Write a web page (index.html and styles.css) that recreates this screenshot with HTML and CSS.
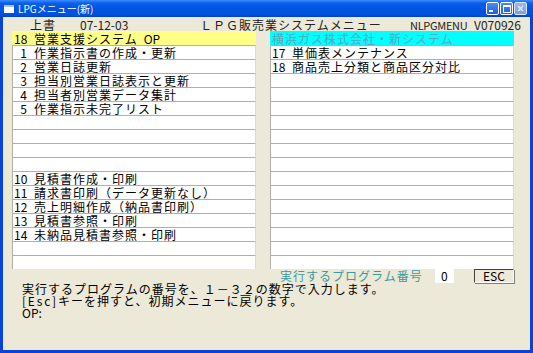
FILE: index.html
```html
<!DOCTYPE html>
<html lang="ja">
<head>
    <meta charset="UTF-8">
    <meta name="viewport" content="width=device-width, initial-scale=1.0">
    <title>LPGメニュー(新)</title>
    <link rel="stylesheet" href="styles.css">
</head>
<body>
<div class="window">
    <div class="titlebar">
        <span class="app-icon"></span>
        <span class="title-text">LPGメニュー(新)</span>
        <div class="controls">
            <span class="ctl ctl-min"></span>
            <span class="ctl ctl-max"></span>
            <span class="ctl ctl-close">
                <svg width="11" height="11" viewBox="0 0 11 11"><path d="M3 3 L8 8 M8 3 L3 8" stroke="#dfe8f6" stroke-width="1.6"/></svg>
            </span>
        </div>
    </div>

    <div class="client">
        <div class="header">
            <span>上書</span>
            <span class="lat">07-12-03</span>
            <span>ＬＰＧ販売業システムメニュー</span>
            <span class="lat narrow">NLPGMENU</span>
            <span class="lat">V070926</span>
        </div>

        <div class="lists">
            <div class="list">
                <div class="row row-yellow"><span class="no">18</span>営業支援システム<span class="lat op">OP</span></div>
                <div class="row"><span class="no">1</span>作業指示書の作成・更新</div>
                <div class="row"><span class="no">2</span>営業日誌更新</div>
                <div class="row"><span class="no">3</span>担当別営業日誌表示と更新</div>
                <div class="row"><span class="no">4</span>担当者別営業データ集計</div>
                <div class="row"><span class="no">5</span>作業指示未完了リスト</div>
                <div class="row"></div>
                <div class="row"></div>
                <div class="row"></div>
                <div class="row"></div>
                <div class="row"><span class="no">10</span>見積書作成・印刷</div>
                <div class="row"><span class="no">11</span>請求書印刷（データ更新なし）</div>
                <div class="row"><span class="no">12</span>売上明細作成（納品書印刷）</div>
                <div class="row"><span class="no">13</span>見積書参照・印刷</div>
                <div class="row"><span class="no">14</span>未納品見積書参照・印刷</div>
                <div class="row"></div>
                <div class="row"></div>
            </div>
            <div class="list">
                <div class="row row-cyan">横浜ガス株式会社・新システム</div>
                <div class="row"><span class="no">17</span>単価表メンテナンス</div>
                <div class="row"><span class="no">18</span>商品売上分類と商品区分対比</div>
                <div class="row"></div>
                <div class="row"></div>
                <div class="row"></div>
                <div class="row"></div>
                <div class="row"></div>
                <div class="row"></div>
                <div class="row"></div>
                <div class="row"></div>
                <div class="row"></div>
                <div class="row"></div>
                <div class="row"></div>
                <div class="row"></div>
                <div class="row"></div>
                <div class="row"></div>
            </div>
        </div>

        <div class="prompt">
            <span class="prompt-label">実行するプログラム番号</span>
            <span class="prompt-input lat">0</span>
            <span class="esc-btn lat">ESC</span>
        </div>

        <div class="help">
            <div>実行するプログラムの番号を、１－３２の数字で入力します。</div>
            <div><span class="esc-key">[Esc]</span>キーを押すと、初期メニューに戻ります。</div>
            <div class="lat">OP:</div>
        </div>
    </div>
</div>
</body>
</html>
```

FILE: styles.css
```css
* {
    padding: 0;
    margin: 0;
    box-sizing: border-box;
}

body {
    width: 533px;
    height: 353px;
    overflow: hidden;
    background: #ece9d8;
    font-family: "Noto Sans CJK JP", sans-serif;
    font-size: 12px;
    letter-spacing: 1px;
    color: #000;
}

/* 半角の文字 */
.lat {
    letter-spacing: 0;
}

.narrow {
    font-size: 11px;
    letter-spacing: -0.3px;
}

.esc-key {
    letter-spacing: 1.8px;
}

.window {
    width: 533px;
    height: 353px;
    display: flex;
    flex-direction: column;
    background: #0842d6;
}

.titlebar {
    height: 17px;
    display: flex;
    align-items: center;
    padding-left: 4px;
    background: linear-gradient(to bottom, #3d8bff 0%, #0d5fe9 18%, #0054e3 50%, #0052dc 85%, #0043c4 100%);
    color: #fff;
}

.app-icon {
    width: 10px;
    height: 8px;
    background: #fff;
    border-top: 2px solid #9fc4ff;
    margin-right: 4px;
}

.title-text {
    font-size: 10px;
    letter-spacing: 0;
    line-height: 17px;
}

.controls {
    margin-left: auto;
    margin-right: 6px;
    display: flex;
    gap: 1px;
}

.ctl {
    width: 13px;
    height: 13px;
    border: 1px solid #fff;
    border-radius: 2px;
    background: linear-gradient(to bottom, #4b8bf5, #1d5ee0);
    position: relative;
    display: flex;
    align-items: center;
    justify-content: center;
}

.ctl-min::after {
    content: "";
    position: absolute;
    left: 2px;
    bottom: 2px;
    width: 4px;
    height: 2px;
    background: #fff;
}

.ctl-max::after {
    content: "";
    width: 6px;
    height: 5px;
    border: 1px solid #fff;
    border-top-width: 2px;
}

.ctl-close {
    background: linear-gradient(to bottom, #9cb9e6, #7c9fd8);
    border-color: #dfe8f6;
}

.client {
    flex: 1;
    margin: 0 3px 3px 3px;
    background: #ece9d8;
    display: flex;
    flex-direction: column;
}

.header {
    height: 14px;
    line-height: 14px;
    padding-top: 1px;
    display: grid;
    grid-template-columns: 50px 120px 210px 64px auto;
    padding-left: 27px;
    color: #222;
}

.lists {
    display: flex;
    gap: 14px;
    padding-left: 9px;
}

.list {
    width: 244px;
    display: flex;
    flex-direction: column;
}

.row {
    height: 14px;
    line-height: 13px;
    background: #fff;
    border-top: 1px solid #b2b0a6;
    border-left: 1px solid #b2b0a6;
    border-right: 1px solid #dedcd2;
    padding-left: 1px;
    white-space: nowrap;
}

.no {
    display: inline-block;
    width: 13px;
    margin-right: 7px;
    text-align: right;
    letter-spacing: 0;
}

.op {
    margin-left: 6px;
}

.row-yellow {
    background: #ffff88;
    border-color: #ffff88;
}

.row-cyan {
    background: #00ffff;
    border-color: #00ffff;
    color: #5aa8bc;
}

.prompt {
    height: 14px;
    display: flex;
    align-items: center;
    padding-left: 277px;
}

.prompt-label {
    width: 155px;
    color: #3a9a9e;
    line-height: 14px;
}

.prompt-input {
    width: 19px;
    height: 14px;
    line-height: 14px;
    background: #fff;
    padding-left: 6px;
}

.esc-btn {
    margin-left: 20px;
    width: 40px;
    height: 14px;
    line-height: 12px;
    text-align: center;
    border: 1px solid #404040;
    border-right-color: #fff;
    border-bottom-color: #fff;
    box-shadow: 1px 1px 0 #808080;
}

.help {
    padding-left: 19px;
    line-height: 12px;
}
```
